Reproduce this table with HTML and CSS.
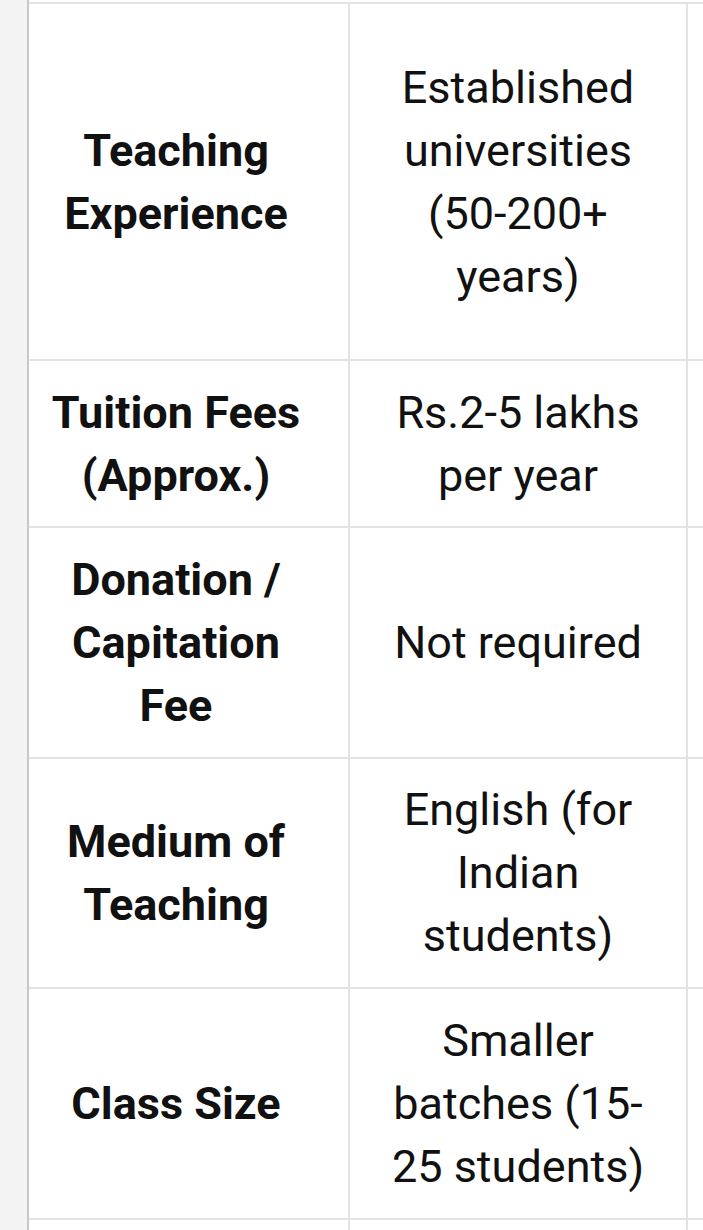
FILE: index.html
```html
<!DOCTYPE html>
<html lang="en">
<head>
<meta charset="utf-8">
<title>Comparison table</title>
<link rel="stylesheet" href="styles.css">
</head>
<body>
<div class="page">
  <div class="scroller">
    <table class="compare">
      <colgroup>
        <col class="c1">
        <col class="c2">
        <col class="c3">
      </colgroup>
      <tbody>
        <tr class="r5">
          <th>Teaching Experience</th>
          <td>Established universities (50-200+ years)</td>
          <td></td>
        </tr>
        <tr>
          <th>Tuition Fees (Approx.)</th>
          <td>Rs.2-5 lakhs per year</td>
          <td></td>
        </tr>
        <tr class="r3">
          <th>Donation / Capitation Fee</th>
          <td>Not required</td>
          <td></td>
        </tr>
        <tr class="r3">
          <th>Medium of Teaching</th>
          <td>English (for Indian students)</td>
          <td></td>
        </tr>
        <tr class="r3">
          <th>Class Size</th>
          <td>Smaller batches (15-25 students)</td>
          <td></td>
        </tr>
        <tr class="r3">
          <th>&nbsp;</th>
          <td>&nbsp;</td>
          <td></td>
        </tr>
      </tbody>
    </table>
  </div>
  <div class="gutter"></div>
</div>
</body>
</html>
```

FILE: styles.css
```css
html, body {
  margin: 0;
  padding: 0;
  background: #ffffff;
}

.page {
  position: relative;
  width: 703px;
  height: 1230px;
  overflow: hidden;
}

.scroller {
  padding-top: 2px;
  padding-left: 2px;
}

.compare {
  border-collapse: collapse;
  table-layout: fixed;
  width: 985px;
  font-family: Roboto, "Liberation Sans", Arial, sans-serif;
  font-size: 45px;
  line-height: 63px;
  color: #111111;
}

.c1 { width: 346px; }
.c2 { width: 338px; }
.c3 { width: 301px; }

.compare th,
.compare td {
  border: 2px solid #e3e3e3;
  padding: 19.5px 32px;
  text-align: center;
  vertical-align: middle;
}

.compare th {
  font-weight: 700;
}

.compare td {
  font-weight: 400;
}

.r5 { height: 357px; }
.r3 { height: 230.5px; }

.gutter {
  position: absolute;
  top: 0;
  left: 0;
  bottom: 0;
  width: 27px;
  background: #f3f3f3;
  border-right: 2px solid #c8c8c8;
}
```
